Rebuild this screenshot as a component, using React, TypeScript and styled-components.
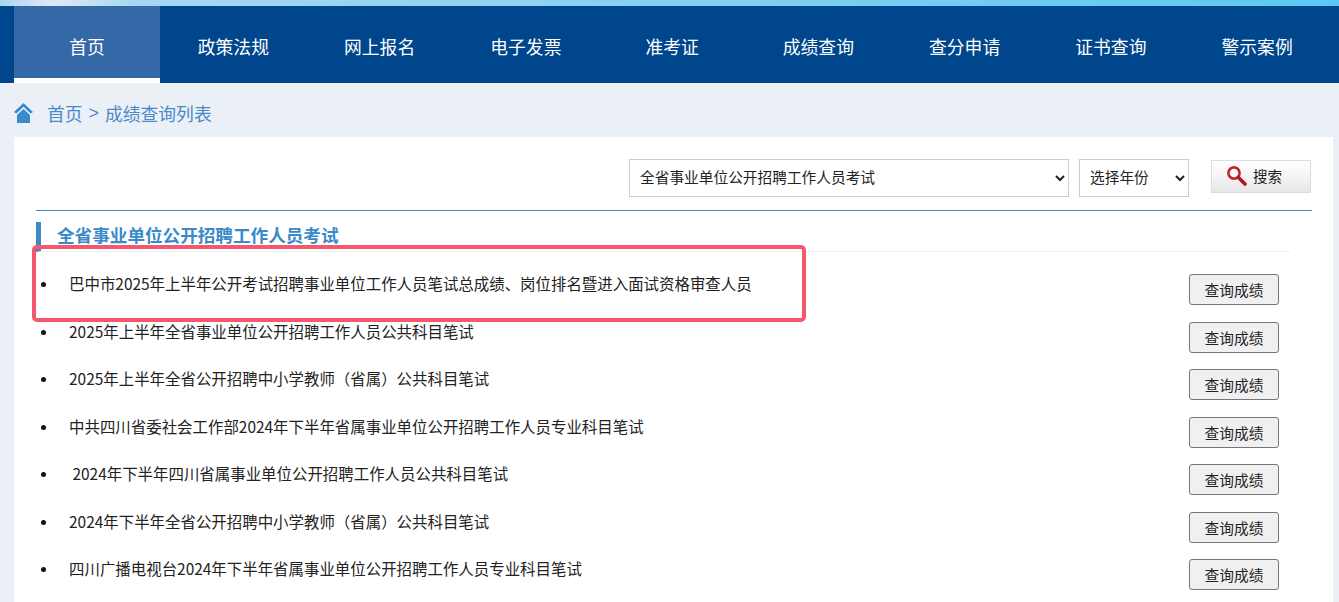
import styled, { createGlobalStyle } from "styled-components";

const navItems = ["首页", "政策法规", "网上报名", "电子发票", "准考证", "成绩查询", "查分申请", "证书查询", "警示案例"];

const results = [
  "巴中市2025年上半年公开考试招聘事业单位工作人员笔试总成绩、岗位排名暨进入面试资格审查人员",
  "2025年上半年全省事业单位公开招聘工作人员公共科目笔试",
  "2025年上半年全省公开招聘中小学教师（省属）公共科目笔试",
  "中共四川省委社会工作部2024年下半年省属事业单位公开招聘工作人员专业科目笔试",
  "\u00a02024年下半年四川省属事业单位公开招聘工作人员公共科目笔试",
  "2024年下半年全省公开招聘中小学教师（省属）公共科目笔试",
  "四川广播电视台2024年下半年省属事业单位公开招聘工作人员专业科目笔试",
];

const GlobalStyle = createGlobalStyle`
  html, body {
    margin: 0;
    padding: 0;
    height: 602px;
    overflow: hidden;
    background: #ebf0f7;
    font-family: "Noto Sans CJK SC", "Liberation Sans", sans-serif;
  }
  * { box-sizing: border-box; }
`;

const Page = styled.div`
  position: relative;
  width: 1339px;
  height: 602px;
  overflow: hidden;
`;

const TopStrip = styled.div`
  height: 6px;
  background: linear-gradient(90deg, #a9d6f1 0%, #dfe9f6 4%, #a6d8f3 10%, #86cff1 50%, #5cc8f2 100%);
`;

const Nav = styled.nav`
  display: flex;
  height: 77px;
  padding-left: 14px;
  background: #00468c;
`;

const NavItem = styled.a<{ $active?: boolean }>`
  flex: 0 0 146.25px;
  height: 77px;
  display: flex;
  align-items: center;
  justify-content: center;
  padding-top: 8px;
  font-size: 17.8px;
  color: #fff;
  background: ${({ $active }) => ($active ? "#3568a6" : "transparent")};
  border-bottom: 5px solid ${({ $active }) => ($active ? "#fff" : "transparent")};
`;

const Crumbs = styled.div`
  height: 54px;
  display: flex;
  align-items: center;
  padding: 6px 0 0 14px;
  font-size: 17.8px;
  color: #4a8ac6;
`;

const HomeIcon = styled.svg`
  width: 19px;
  height: 20px;
  margin-right: 14px;
`;

const Sep = styled.span`
  margin: 0 6px;
  font-family: "Liberation Sans", sans-serif;
`;

const Panel = styled.main`
  margin: 0 6px 0 14px;
  padding: 22px 21px 0 22px;
  height: 465px;
  background: #fff;
`;

const Filters = styled.div`
  display: flex;
  align-items: flex-start;
  padding-left: 593px;
  height: 52px;
  border-bottom: 1px solid #3f8bbf;
`;

const Select = styled.select<{ $width: number }>`
  width: ${({ $width }) => $width}px;
  height: 38px;
  margin-right: 10px;
  padding: 0 0 3px 6px;
  font-family: inherit;
  font-size: 14.7px;
  color: #222;
  background: #fff;
  border: 1px solid #ccc;
  border-radius: 0;
`;

const SearchButton = styled.button`
  width: 100px;
  height: 33px;
  margin: 1px 0 0 12px;
  display: flex;
  align-items: center;
  gap: 6px;
  padding: 0 0 2px 14px;
  font-family: inherit;
  font-size: 14.5px;
  color: #222;
  background: linear-gradient(180deg, #fff 0%, #f6f6f6 45%, #e6e6e6 100%);
  border: 1px solid #dcdcdc;
`;

const Heading = styled.h2`
  width: 1254px;
  height: 30px;
  margin: 11px 0 0;
  padding-left: 16px;
  font-size: 17.6px;
  line-height: 25px;
  font-weight: 700;
  color: #3a8ac8;
  border-left: 5px solid #3a8ac8;
  border-bottom: 1px solid #eee;
`;

const ResultList = styled.ul`
  margin: 0;
  padding: 22px 0 0 5px;
  width: 1243px;
  list-style: none;
`;

const ResultRow = styled.li`
  height: 47.5px;
  display: flex;
  align-items: flex-start;
  font-size: 15.45px;
  color: #222;
`;

const Bullet = styled.i`
  flex: none;
  width: 5px;
  height: 5px;
  margin: 8px 23px 0 0;
  border-radius: 50%;
  background: #111;
`;

const RowText = styled.span`
  flex: 1;
  line-height: 18px;
`;

const QueryButton = styled.button`
  width: 90px;
  height: 31px;
  padding: 0;
  font-family: inherit;
  font-size: 14.7px;
  color: #222;
  background: #f0f0f0;
  border: 1px solid #767676;
  border-radius: 3px;
`;

const Highlight = styled.div`
  position: absolute;
  left: 32px;
  top: 245px;
  width: 774px;
  height: 77px;
  border: 4px solid #f5586c;
  border-radius: 5px;
  pointer-events: none;
`;

export default function App() {
  return (
    <Page>
      <GlobalStyle />
      <TopStrip />
      <Nav>
        {navItems.map((item, i) => (
          <NavItem key={item} $active={i === 0}>
            {item}
          </NavItem>
        ))}
      </Nav>
      <Crumbs>
        <HomeIcon viewBox="0 0 19 20">
          <path d="M9.5 0 L19 9 L16.6 10.6 L9.5 3.8 L2.4 10.6 L0 9 Z" fill="#3a8ad0" />
          <path d="M9.5 6 L16 12 V20 H3 V12 Z" fill="#3a8ad0" />
        </HomeIcon>
        首页<Sep>&gt;</Sep>成绩查询列表
      </Crumbs>
      <Panel>
        <Filters>
          <Select $width={440} defaultValue="a">
            <option value="a">全省事业单位公开招聘工作人员考试</option>
          </Select>
          <Select $width={110} defaultValue="y">
            <option value="y">选择年份</option>
          </Select>
          <SearchButton>
            <svg width="21" height="21" viewBox="0 0 21 21">
              <circle cx="8" cy="8" r="5.6" fill="#fff" stroke="#c8232c" strokeWidth="2.6" />
              <path d="M12.4 12.4 L19 19" stroke="#b01820" strokeWidth="3.6" strokeLinecap="round" />
            </svg>
            搜索
          </SearchButton>
        </Filters>
        <Heading>全省事业单位公开招聘工作人员考试</Heading>
        <ResultList>
          {results.map((title) => (
            <ResultRow key={title}>
              <Bullet />
              <RowText>{title}</RowText>
              <QueryButton>查询成绩</QueryButton>
            </ResultRow>
          ))}
        </ResultList>
      </Panel>
      <Highlight />
    </Page>
  );
}
